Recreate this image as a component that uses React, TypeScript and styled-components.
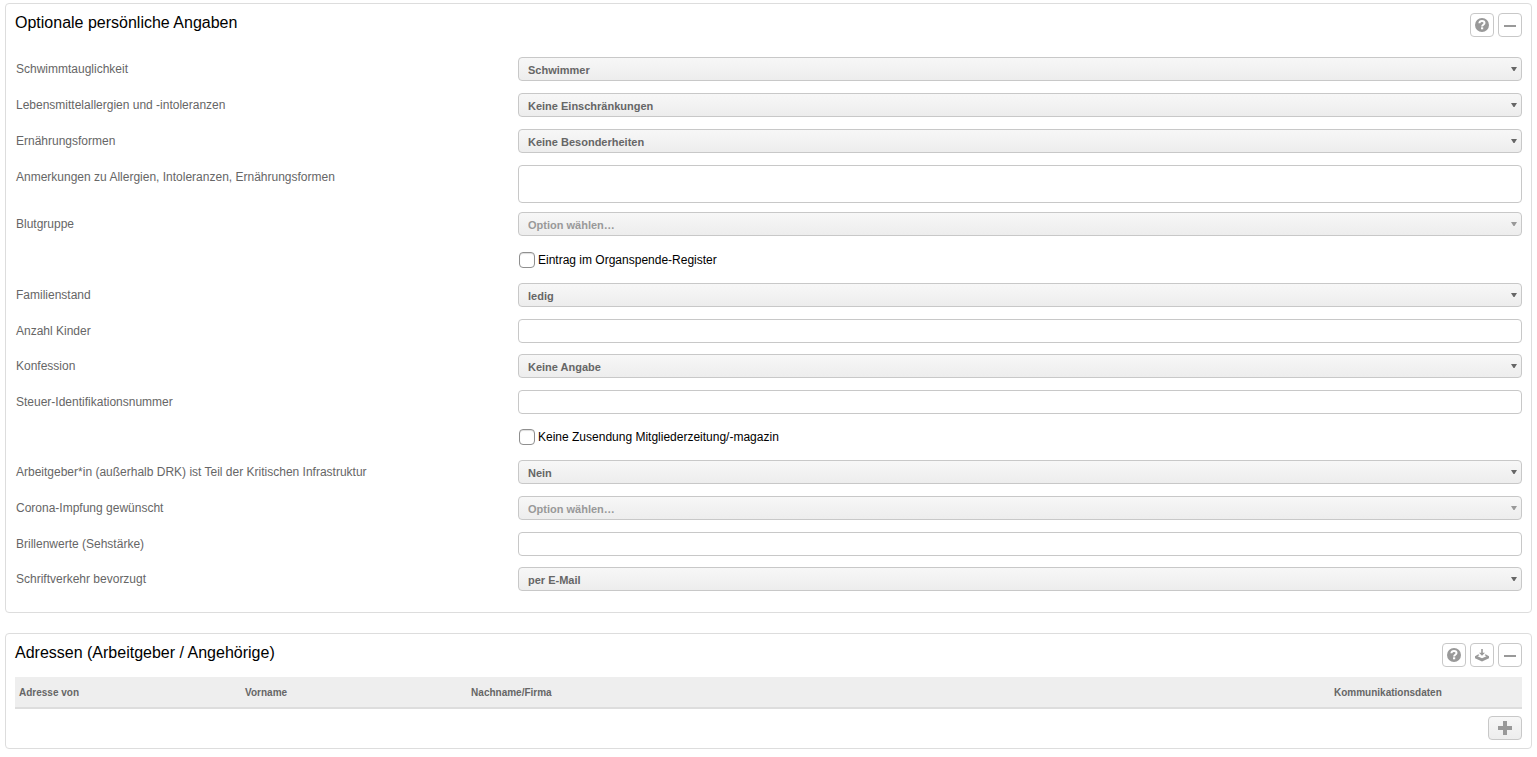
import React, { useId } from 'react';
import styled, { createGlobalStyle, css } from 'styled-components';

const GlobalStyle = createGlobalStyle`
  *, *::before, *::after { box-sizing: border-box; }
  body {
    margin: 0;
    background: #fff;
    color: #666;
    font-family: Arial, "Liberation Sans", sans-serif;
    font-size: 12px;
    line-height: 16px;
  }
`;

const Page = styled.main`
  display: flex;
  flex-direction: column;
  gap: 20px;
  padding: 3px 5px 8px;
`;

const Panel = styled.section`
  padding: 9px 9px 8px;
  border: 1px solid #ddd;
  border-radius: 4px;
`;

const PanelHeader = styled.header`
  display: flex;
  justify-content: space-between;
  align-items: flex-start;
`;

const PanelTitle = styled.h2`
  margin: 0;
  color: #000;
  font-size: 16px;
  font-weight: 400;
  line-height: 20px;
`;

const Actions = styled.div`
  display: flex;
  gap: 4px;
`;

const IconButton = styled.button`
  display: flex;
  align-items: center;
  justify-content: center;
  width: 24px;
  height: 24px;
  padding: 0;
  border: 1px solid #c8c8c8;
  border-radius: 4px;
  background: #fff;
  color: #999;
  cursor: pointer;
`;

const AddButton = styled(IconButton)`
  width: 34px;
  background: linear-gradient(#f7f7f7, #ededed);
`;

const Fields = styled.form`
  margin: 0;
  padding: 20px 0 1px 1px;
`;

const rowGap = { select: 12, text: 11, check: 11, area: 9 };

const Row = styled.div<{ $kind: Kind }>`
  display: grid;
  grid-template-columns: 1fr 2fr;
  align-items: ${p => (p.$kind === 'area' ? 'start' : 'center')};
  min-height: 24px;
  margin-bottom: ${p => rowGap[p.$kind]}px;
`;

const Label = styled.label`
  line-height: 24px;
`;

const box = css`
  display: block;
  width: 100%;
  height: 24px;
  margin: 0;
  border: 1px solid #c8c8c8;
  border-radius: 4px;
  background: #fff;
  font-family: inherit;
  font-size: 12px;
`;

const TextInput = styled.input`
  ${box}
  padding: 0 9px;
`;

const TextArea = styled.textarea`
  ${box}
  height: 38px;
  padding: 4px 9px;
  resize: none;
`;

const SelectFrame = styled.div<{ $empty: boolean }>`
  display: grid;
  align-items: center;
  color: ${p => (p.$empty ? '#999' : '#666')};
  > * { grid-area: 1 / 1; }
  > svg {
    justify-self: end;
    margin-right: 5px;
    pointer-events: none;
  }
`;

const Select = styled.select`
  ${box}
  appearance: none;
  padding: 2px 20px 0 9px;
  background: linear-gradient(#f7f7f7, #ededed);
  color: inherit;
  font-size: 11px;
  font-weight: 700;
`;

const CheckLabel = styled.label`
  display: flex;
  grid-column: 2;
  align-items: center;
  gap: 3px;
  padding-left: 1px;
  color: #000;
`;

const Checkbox = styled.input`
  appearance: none;
  width: 16px;
  height: 16px;
  margin: 0;
  border: 1px solid #8f8f8f;
  border-radius: 4px;
  background: #fff;
  box-shadow: inset 0 1px 1px #ddd;
  &:checked { background: #666; }
`;

const AddressTable = styled.table`
  width: 100%;
  margin: 10px 0 7px;
  border-collapse: separate;
  border-spacing: 0;
  table-layout: fixed;
`;

const HeadCell = styled.th<{ $width?: string }>`
  width: ${p => p.$width ?? 'auto'};
  height: 32px;
  padding: 2px 4px 0;
  border-bottom: 2px solid #ddd;
  background: #eee;
  font-size: 10px;
  font-weight: 700;
  text-align: left;
`;

const Footer = styled.div`
  display: flex;
  justify-content: flex-end;
`;

const HelpIcon = () => (
  <svg width="14" height="14" viewBox="0 0 14 14" aria-hidden="true">
    <circle cx="7" cy="7" r="7" fill="currentColor" />
    <path d="M4.400 5.300C4.500 3.800 5.500 3 7 3c1.600 0 2.500.9 2.500 2 0 1.800-2.400 1.700-2.400 3.500" fill="none" stroke="#fff" strokeWidth="2" />
    <rect x="6" y="9.300" width="2.200" height="2" fill="#fff" />
  </svg>
);

const MinusIcon = () => (
  <svg width="12" height="14" viewBox="0 0 12 14" aria-hidden="true">
    <rect y="7" width="12" height="2" fill="currentColor" />
  </svg>
);

const ImportIcon = () => (
  <svg width="14" height="14" viewBox="0 0 14 14" aria-hidden="true">
    <path d="M6.200 1h1.600v3.800H10L7 7.800 4 4.800h2.200z" fill="currentColor" />
    <path d="M3.400 6.200 0 8.200v2L7 13.500l7-3.300v-2l-3.400-2-1 1 1.900 1L7 10.300 2.500 8.200l1.900-1z" fill="currentColor" />
  </svg>
);

const PlusIcon = () => (
  <svg width="14" height="14" viewBox="0 0 14 14" aria-hidden="true">
    <path d="M5 0h4v5h5v4H9v5H5V9H0V5h5z" fill="currentColor" />
  </svg>
);

const ArrowIcon = () => (
  <svg width="6" height="4" viewBox="0 0 6 4" aria-hidden="true">
    <path d="M0 0h6L3.500 4h-1z" fill="currentColor" />
  </svg>
);

type Kind = 'select' | 'text' | 'area' | 'check';
interface Field { kind: Kind; label: string; value?: string }

const PLACEHOLDER = 'Option wählen…';

const fields: Field[] = [
  { kind: 'select', label: 'Schwimmtauglichkeit', value: 'Schwimmer' },
  { kind: 'select', label: 'Lebensmittelallergien und -intoleranzen', value: 'Keine Einschränkungen' },
  { kind: 'select', label: 'Ernährungsformen', value: 'Keine Besonderheiten' },
  { kind: 'area', label: 'Anmerkungen zu Allergien, Intoleranzen, Ernährungsformen' },
  { kind: 'select', label: 'Blutgruppe' },
  { kind: 'check', label: 'Eintrag im Organspende-Register' },
  { kind: 'select', label: 'Familienstand', value: 'ledig' },
  { kind: 'text', label: 'Anzahl Kinder' },
  { kind: 'select', label: 'Konfession', value: 'Keine Angabe' },
  { kind: 'text', label: 'Steuer-Identifikationsnummer' },
  { kind: 'check', label: 'Keine Zusendung Mitgliederzeitung/-magazin' },
  { kind: 'select', label: 'Arbeitgeber*in (außerhalb DRK) ist Teil der Kritischen Infrastruktur', value: 'Nein' },
  { kind: 'select', label: 'Corona-Impfung gewünscht' },
  { kind: 'text', label: 'Brillenwerte (Sehstärke)' },
  { kind: 'select', label: 'Schriftverkehr bevorzugt', value: 'per E-Mail' },
];

function FieldRow({ kind, label, value }: Field) {
  const id = useId();
  if (kind === 'check') {
    return (
      <Row $kind={kind}>
        <CheckLabel htmlFor={id}>
          <Checkbox id={id} type="checkbox" />
          {label}
        </CheckLabel>
      </Row>
    );
  }
  return (
    <Row $kind={kind}>
      <Label htmlFor={id}>{label}</Label>
      {kind === 'text' && <TextInput id={id} type="text" />}
      {kind === 'area' && <TextArea id={id} />}
      {kind === 'select' && (
        <SelectFrame $empty={!value}>
          <Select id={id}>
            <option>{value ?? PLACEHOLDER}</option>
          </Select>
          <ArrowIcon />
        </SelectFrame>
      )}
    </Row>
  );
}

export default function App() {
  return (
    <>
      <GlobalStyle />
      <Page>
        <Panel>
          <PanelHeader>
            <PanelTitle>Optionale persönliche Angaben</PanelTitle>
            <Actions>
              <IconButton type="button" aria-label="Hilfe"><HelpIcon /></IconButton>
              <IconButton type="button" aria-label="Einklappen"><MinusIcon /></IconButton>
            </Actions>
          </PanelHeader>
          <Fields>
            {fields.map(field => <FieldRow key={field.label} {...field} />)}
          </Fields>
        </Panel>
        <Panel>
          <PanelHeader>
            <PanelTitle>Adressen (Arbeitgeber / Angehörige)</PanelTitle>
            <Actions>
              <IconButton type="button" aria-label="Hilfe"><HelpIcon /></IconButton>
              <IconButton type="button" aria-label="Importieren"><ImportIcon /></IconButton>
              <IconButton type="button" aria-label="Einklappen"><MinusIcon /></IconButton>
            </Actions>
          </PanelHeader>
          <AddressTable>
            <thead>
              <tr>
                <HeadCell $width="15%">Adresse von</HeadCell>
                <HeadCell $width="15%">Vorname</HeadCell>
                <HeadCell>Nachname/Firma</HeadCell>
                <HeadCell $width="192px">Kommunikationsdaten</HeadCell>
              </tr>
            </thead>
          </AddressTable>
          <Footer>
            <AddButton type="button" aria-label="Adresse hinzufügen"><PlusIcon /></AddButton>
          </Footer>
        </Panel>
      </Page>
    </>
  );
}
